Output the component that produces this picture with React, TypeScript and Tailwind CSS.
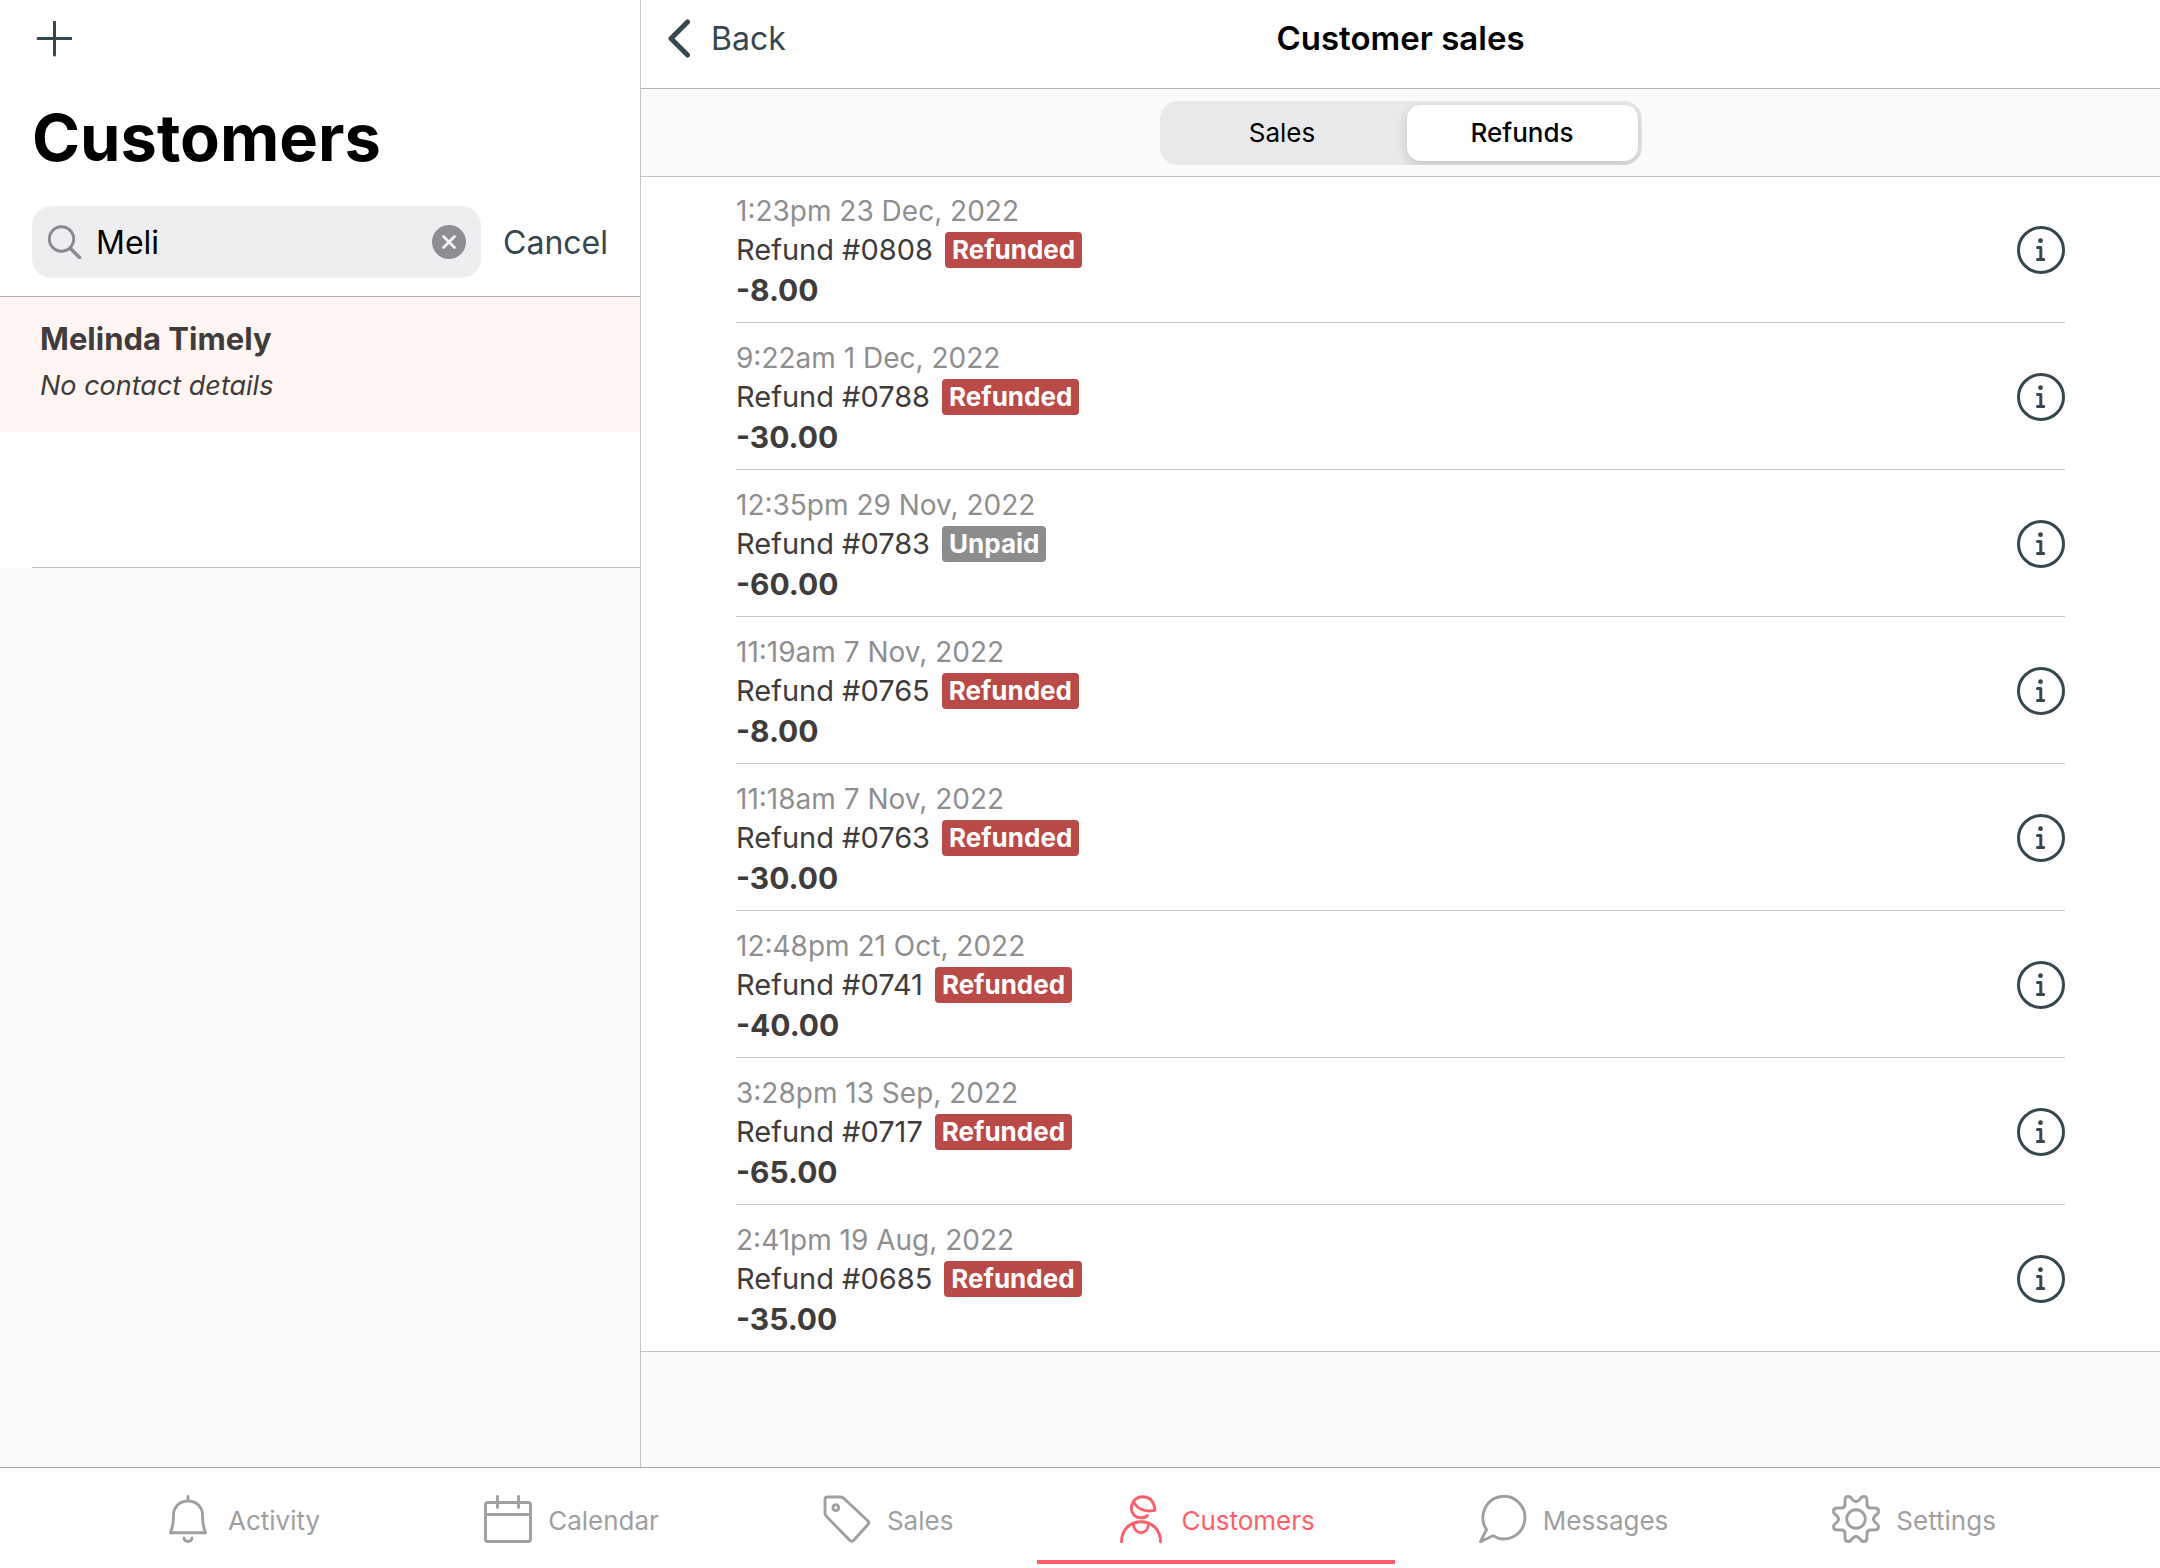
import { useState, type ReactNode } from "react";

type Refund = {
  date: string;
  number: string;
  status: "Refunded" | "Unpaid";
  amount: string;
};

const refunds: Refund[] = [
  { date: "1:23pm 23 Dec, 2022", number: "#0808", status: "Refunded", amount: "-8.00" },
  { date: "9:22am 1 Dec, 2022", number: "#0788", status: "Refunded", amount: "-30.00" },
  { date: "12:35pm 29 Nov, 2022", number: "#0783", status: "Unpaid", amount: "-60.00" },
  { date: "11:19am 7 Nov, 2022", number: "#0765", status: "Refunded", amount: "-8.00" },
  { date: "11:18am 7 Nov, 2022", number: "#0763", status: "Refunded", amount: "-30.00" },
  { date: "12:48pm 21 Oct, 2022", number: "#0741", status: "Refunded", amount: "-40.00" },
  { date: "3:28pm 13 Sep, 2022", number: "#0717", status: "Refunded", amount: "-65.00" },
  { date: "2:41pm 19 Aug, 2022", number: "#0685", status: "Refunded", amount: "-35.00" },
];

function TabIcon({ children }: { children: ReactNode }) {
  return (
    <svg
      viewBox="0 0 48 48"
      className="size-12 shrink-0 overflow-visible"
      fill="none"
      stroke="currentColor"
      strokeWidth="2.9"
      strokeLinecap="round"
      strokeLinejoin="round"
      aria-hidden="true"
    >
      {children}
    </svg>
  );
}

const gearQuarter =
  "M24 6.5Q21.8 6.5 20 4Q18.5 1.5 16.2 1.5Q13 1.5 13 5V9.5Q13 13 9.5 13H5Q1.5 13 1.5 16.2Q1.5 18.5 4 20Q6.5 21.8 6.5 24";

const tabs: { label: string; icon: ReactNode }[] = [
  {
    label: "Activity",
    icon: (
      <TabIcon>
        <path d="M24 1.500v3.500M24 6C15 6 9.500 12.500 9.500 20C9.500 28 8.500 33 6.500 37.700H41.500C39.500 33 38.500 28 38.500 20C38.500 12.500 33 6 24 6Z" />
        <path d="M20 43c.8 4.600 7.200 4.600 8 0" />
      </TabIcon>
    ),
  },
  {
    label: "Calendar",
    icon: (
      <TabIcon>
        <rect x="1.500" y="7.500" width="45" height="39" rx="2.500" />
        <path d="M1.500 19.500h45M13.500 1.500v11M34.500 1.500v11" />
      </TabIcon>
    ),
  },
  {
    label: "Sales",
    icon: (
      <TabIcon>
        <path d="M2 4.500Q2 2 4.500 2H17.500Q19.500 2 21 3.500L45 26Q46.500 27.700 45 29.500L30.500 45.500Q28.800 47 27 45.500L3.500 21.500Q2 20 2 18Z" />
        <circle cx="12.800" cy="12.700" r="2.900" />
      </TabIcon>
    ),
  },
  {
    label: "Customers",
    icon: (
      <TabIcon>
        <path d="M16.500 6.500C19 3 22 1.700 25.500 1.700C34 1.700 37.200 8 38 15.200C29 17.500 20 14.500 16.500 6.500Z" />
        <path d="M16.500 6.500C11.500 14.500 16 22.800 24 22.800C27 22.800 29.300 22 30.500 20.500" />
        <path d="M4.500 46.700C4.500 35 12.500 26.800 24 26.800S43.500 35 43.500 46.700" />
        <path d="M16.300 28.700C16.800 34.500 20 37.700 24 37.700S31.200 34.500 31.700 28.700" />
      </TabIcon>
    ),
  },
  {
    label: "Messages",
    icon: (
      <TabIcon>
        <path d="M7.500 34.500A21 21.300 0 1 1 14 40.800L1.500 46.700Z" />
      </TabIcon>
    ),
  },
  {
    label: "Settings",
    icon: (
      <TabIcon>
        <circle cx="24" cy="24" r="9.300" />
        <path d={gearQuarter} />
        <path d={gearQuarter} transform="rotate(90 24 24)" />
        <path d={gearQuarter} transform="rotate(180 24 24)" />
        <path d={gearQuarter} transform="rotate(270 24 24)" />
      </TabIcon>
    ),
  },
];

function Sidebar() {
  const [query, setQuery] = useState("Meli");
  return (
    <aside className="flex w-[641px] shrink-0 flex-col border-r border-[#c4c4c6] bg-[#fafafa]">
      <div className="border-b border-[#b2aeae] bg-white px-8 pb-[18px]">
        <div className="flex h-[78px] items-center">
          <button type="button" aria-label="Add customer" className="px-1 text-[#37474f]">
            <svg viewBox="0 0 36 36" className="size-9" fill="none" stroke="currentColor" strokeWidth="3" strokeLinecap="round" aria-hidden="true">
              <path d="M18.500 1v33M2 17.500h33" />
            </svg>
          </button>
        </div>
        <h1 className="pt-5 text-[65px] leading-20 font-bold text-black">Customers</h1>
        <div className="mt-7 flex items-center gap-[22px]">
          <div className="flex h-[72px] flex-1 items-center gap-[14px] rounded-[20px] bg-[#eeeef0] pr-[15px] pl-4">
            <svg viewBox="0 0 34 34" className="size-[34px] shrink-0 text-[#8a8a8e]" fill="none" stroke="currentColor" strokeLinecap="round" aria-hidden="true">
              <circle cx="13.500" cy="14" r="12.200" strokeWidth="2.900" />
              <path d="M22.500 23.500l9 9" strokeWidth="3.600" />
            </svg>
            <input
              type="text"
              aria-label="Search customers"
              value={query}
              onChange={(e) => setQuery(e.target.value)}
              className="w-0 min-w-0 flex-1 bg-transparent pt-0.5 text-[32px] leading-10 text-black outline-none"
            />
            <button type="button" aria-label="Clear search" onClick={() => setQuery("")}>
              <svg viewBox="0 0 34 34" className="size-[34px]" aria-hidden="true">
                <circle cx="17" cy="17" r="17" fill="#8e8d93" />
                <path d="M11.500 11.500l11 11M22.500 11.500l-11 11" stroke="#f4f4f6" strokeWidth="2.800" strokeLinecap="round" />
              </svg>
            </button>
          </div>
          <button type="button" className="pt-0.5 text-[32px] leading-10 text-[#37474f]">
            Cancel
          </button>
        </div>
      </div>
      <div className="bg-white">
        <a href="#melinda-timely" className="block h-[135px] bg-[#fff5f3] px-10 pt-5 text-[#403c3b]">
          <span className="block text-[31px] leading-[44px] font-bold">Melinda Timely</span>
          <span className="block text-[27px] leading-[50px] italic">No contact details</span>
        </a>
        <div className="ml-8 h-[136px] border-b border-[#c4c4c6]" />
      </div>
    </aside>
  );
}

function RefundRow({ refund }: { refund: Refund }) {
  const badge = refund.status === "Refunded" ? "bg-[#b94a48]" : "bg-[#8c8c8c]";
  return (
    <li className="mx-[95px] flex h-[147px] items-center justify-between border-b border-[#c8c7cc] pt-0.5 first:h-[146px] first:pt-0 last:h-[146px] last:border-b-0">
      <div className="pt-0.5 text-[#403c3b]">
        <p className="text-[28px] leading-[38px] text-[#8f8f8f]">{refund.date}</p>
        <p className="flex items-center gap-3 text-[29px] leading-10">
          Refund {refund.number}
          <span className={`rounded-sm px-[7px] text-[26px] leading-9 font-bold text-white ${badge}`}>{refund.status}</span>
        </p>
        <p className="text-[30px] leading-10 font-bold">{refund.amount}</p>
      </div>
      <button type="button" aria-label={`Details of refund ${refund.number}`} className="text-[#37474f]">
        <svg viewBox="0 0 48 48" className="size-12" fill="none" stroke="currentColor" aria-hidden="true">
          <circle cx="24" cy="24" r="22.500" strokeWidth="3" />
          <circle cx="23.500" cy="14.700" r="2.400" fill="currentColor" stroke="none" />
          <path d="M20.500 21.500h3.300v12M20.500 33.600h6.200" strokeWidth="3" strokeLinecap="round" strokeLinejoin="round" />
        </svg>
      </button>
    </li>
  );
}

function Main() {
  const [segment, setSegment] = useState("Refunds");
  return (
    <main className="flex min-w-0 flex-1 flex-col bg-[#fafafa]">
      <header className="grid h-[89px] grid-cols-3 items-start border-b border-[#b2b2b2] bg-white pt-[18px]">
        <button type="button" className="flex items-start gap-5 justify-self-start pl-[26px] text-[32px] leading-[42px] text-[#37474f]">
          <svg viewBox="0 0 24 40" className="h-10 w-6" fill="none" stroke="currentColor" strokeWidth="5" strokeLinecap="round" strokeLinejoin="round" aria-hidden="true">
            <path d="M20.500 4L4 20.500L20.500 37" />
          </svg>
          Back
        </button>
        <h2 className="text-center text-[33px] leading-10 font-semibold text-black">Customer sales</h2>
      </header>
      <div className="flex h-[88px] items-center justify-center border-b border-[#c4c4c6]">
        <div className="grid h-16 w-[482px] grid-cols-2 overflow-hidden rounded-[18px] bg-[#e9e9eb] p-1">
          {["Sales", "Refunds"].map((name) => (
            <button
              key={name}
              type="button"
              aria-pressed={segment === name}
              onClick={() => setSegment(name)}
              className={
                segment === name
                  ? "ml-1.5 rounded-[14px] bg-white text-[26px] leading-8 font-medium text-black shadow-[0_4px_12px_rgba(0,0,0,0.16)]"
                  : "text-[26px] leading-8 text-black"
              }
            >
              {name}
            </button>
          ))}
        </div>
      </div>
      <ul className="border-b border-[#c4c4c6] bg-white">
        {refunds.map((refund) => (
          <RefundRow key={refund.number} refund={refund} />
        ))}
      </ul>
    </main>
  );
}

export default function App() {
  return (
    <div className="flex min-h-screen flex-col bg-white font-[Inter,'Liberation_Sans',sans-serif]">
      <div className="flex flex-1">
        <Sidebar />
        <Main />
      </div>
      <nav className="flex h-[101px] justify-evenly border-t border-[#adadad] bg-white">
        {tabs.map(({ label, icon }) => {
          const active = label === "Customers";
          return (
            <a
              key={label}
              href={`#${label.toLowerCase()}`}
              aria-current={active ? "page" : undefined}
              className={`relative flex items-start gap-4 pt-[27px] text-[26px] leading-[52px] ${active ? "text-[#ff5f6b]" : "text-[#a0a0a0]"}`}
            >
              {icon}
              {label}
              {active && <span className="absolute -inset-x-20 bottom-1 h-1 bg-[#ff5f6b]" />}
            </a>
          );
        })}
      </nav>
    </div>
  );
}
